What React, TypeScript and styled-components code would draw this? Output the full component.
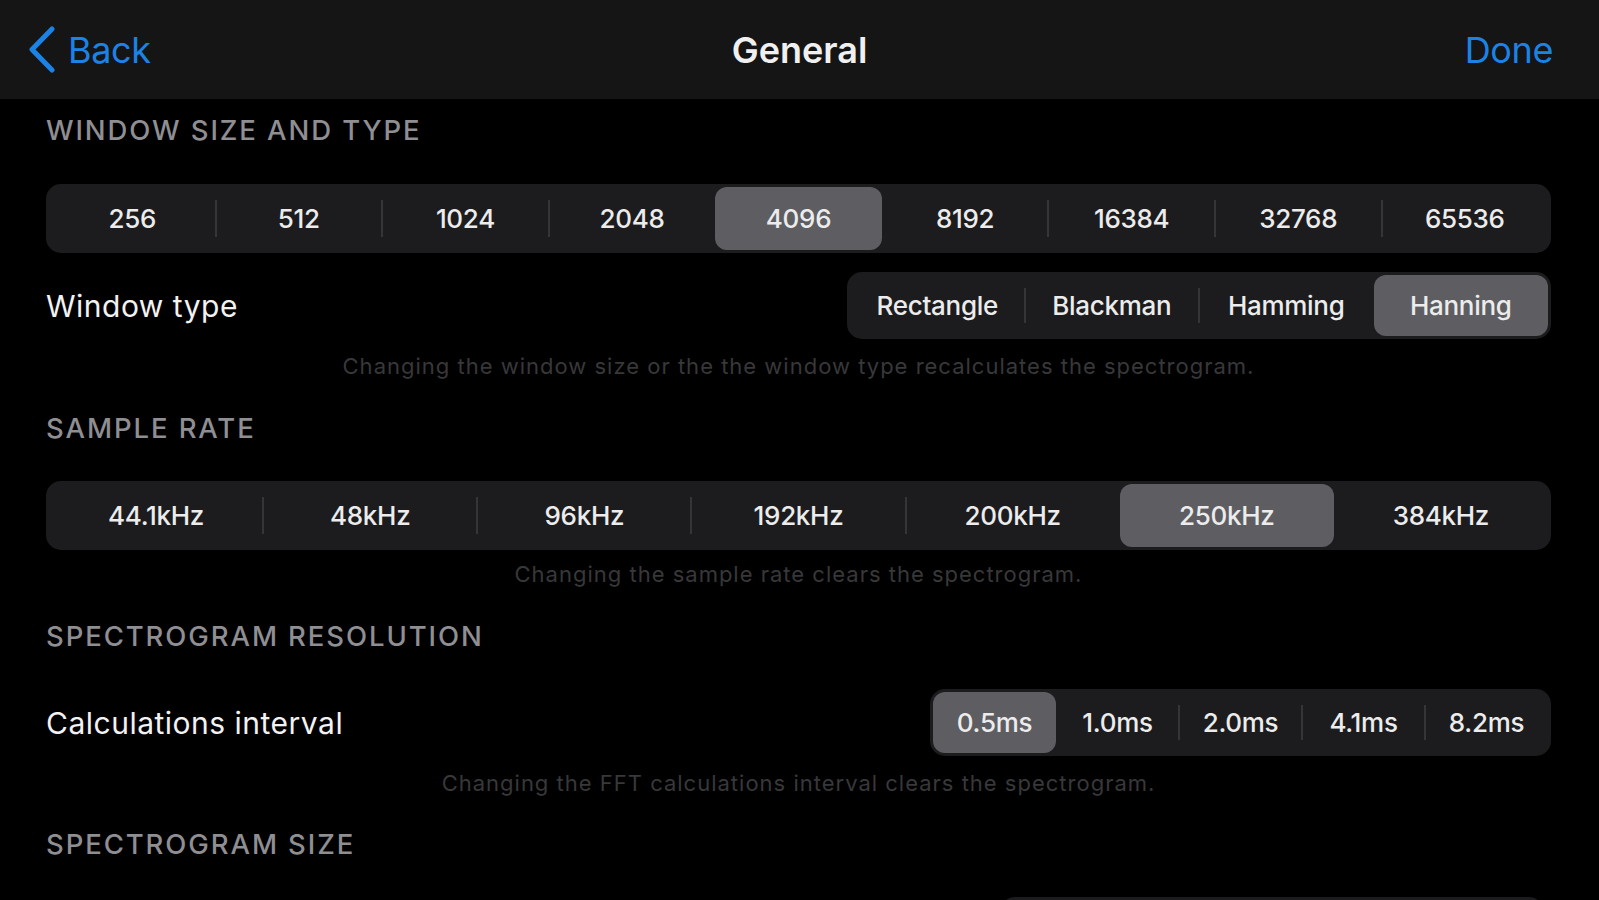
import React from "react";
import styled, { createGlobalStyle } from "styled-components";

const Global = createGlobalStyle`
  html, body { margin: 0; padding: 0; background: #000; }
  body { font-family: "Inter", "Roboto", "Liberation Sans", sans-serif; -webkit-font-smoothing: antialiased; overflow: hidden; }
  #root { width: 1599px; height: 900px; overflow: hidden; }
`;

const Page = styled.div`
  width: 1599px;
  height: 900px;
  background: #000;
  display: flex;
  flex-direction: column;
  overflow: hidden;
`;

const NavBar = styled.header`
  height: 99px;
  flex: none;
  background: #151515;
  display: grid;
  grid-template-columns: 1fr auto 1fr;
  align-items: center;
  padding: 0 46px;
`;

const NavButton = styled.button<{ $align: "start" | "end"; $shift?: number }>`
  justify-self: ${(p) => p.$align};
  margin-left: ${(p) => p.$shift ?? 0}px;
  display: flex;
  align-items: center;
  gap: 10px;
  background: none;
  border: none;
  padding: 0;
  color: #1b83e6;
  font-family: inherit;
  font-size: 36px;
  font-weight: 400;
  letter-spacing: -0.4px;
  cursor: pointer;
`;

const Title = styled.h1`
  margin: 0;
  color: #f0f0f0;
  font-size: 36px;
  font-weight: 600;
  letter-spacing: 0;
`;

const Content = styled.main`
  display: flex;
  flex-direction: column;
  padding: 0 48px 0 46px;
`;

const SectionHeader = styled.h2<{ $mt: number }>`
  margin: ${(p) => p.$mt}px 0 0 0;
  font-size: 27.5px;
  line-height: 34px;
  font-weight: 500;
  color: #8e8e93;
  letter-spacing: 1.9px;
  text-transform: uppercase;
`;

const Control = styled.div<{ $mt?: number; $width?: number; $height: number; $mr?: number }>`
  margin-top: ${(p) => p.$mt ?? 0}px;
  margin-right: ${(p) => p.$mr ?? 0}px;
  ${(p) => (p.$width ? `width: ${p.$width}px;` : "align-self: stretch;")}
  height: ${(p) => p.$height}px;
  flex: none;
  box-sizing: border-box;
  background: #1c1c1e;
  border-radius: 15px;
  padding: 3px;
  display: flex;
  align-items: stretch;
`;

const Segment = styled.div<{ $selected: boolean }>`
  flex: 1 1 0;
  position: relative;
  display: flex;
  align-items: center;
  justify-content: center;
  border-radius: 12px;
  background: ${(p) => (p.$selected ? "#5e5e62" : "transparent")};
  color: #ececec;
  font-size: 26px;
  font-weight: 500;
  letter-spacing: -0.3px;
`;

const Separator = styled.span<{ $visible: boolean }>`
  flex: none;
  width: 2px;
  margin: 13px -1px;
  background: ${(p) => (p.$visible ? "#353538" : "transparent")};
  z-index: 1;
`;

const Row = styled.div<{ $mt: number }>`
  margin-top: ${(p) => p.$mt}px;
  display: flex;
  align-items: center;
  justify-content: space-between;
`;

const TrailingRow = styled.div<{ $mt: number }>`
  margin-top: ${(p) => p.$mt}px;
  display: flex;
  justify-content: flex-end;
`;

const RowLabel = styled.span`
  color: #f2f2f2;
  font-size: 30px;
  font-weight: 400;
  letter-spacing: 0.5px;
`;

const Footnote = styled.p<{ $mt: number }>`
  margin: ${(p) => p.$mt}px 0 0 0;
  text-align: center;
  color: #38383a;
  font-size: 22px;
  line-height: 28px;
  letter-spacing: 1px;
`;

function Segmented({
  items,
  selected,
  width,
  height,
  mt,
}: {
  items: string[];
  selected: number;
  width?: number;
  height: number;
  mt?: number;
}) {
  const parts: React.ReactNode[] = [];
  items.forEach((it, i) => {
    if (i > 0) {
      const vis = i !== selected && i - 1 !== selected;
      parts.push(<Separator key={`s${i}`} $visible={vis} />);
    }
    parts.push(
      <Segment key={it} $selected={i === selected}>
        {it}
      </Segment>
    );
  });
  return (
    <Control $width={width} $height={height} $mt={mt}>
      {parts}
    </Control>
  );
}

const Chevron = () => (
  <svg width="32" height="48" viewBox="0 0 32 48" fill="none">
    <path d="M26 3 L6 23.5 L26 44" stroke="#1b83e6" strokeWidth="5" strokeLinecap="round" strokeLinejoin="round" />
  </svg>
);

export default function App() {
  return (
    <Page>
      <Global />
      <NavBar>
        <NavButton $align="start" $shift={-20}>
          <Chevron />
          <span>Back</span>
        </NavButton>
        <Title>General</Title>
        <NavButton $align="end">Done</NavButton>
      </NavBar>
      <Content>
        <SectionHeader $mt={14}>Window size and type</SectionHeader>
        <Segmented
          mt={37}
          height={69}
          selected={4}
          items={["256", "512", "1024", "2048", "4096", "8192", "16384", "32768", "65536"]}
        />
        <Row $mt={19}>
          <RowLabel>Window type</RowLabel>
          <Segmented width={704} height={67} selected={3} items={["Rectangle", "Blackman", "Hamming", "Hanning"]} />
        </Row>
        <Footnote $mt={13}>
          Changing the window size or the the window type recalculates the spectrogram.
        </Footnote>

        <SectionHeader $mt={31}>Sample rate</SectionHeader>
        <Segmented
          mt={36}
          height={69}
          selected={5}
          items={["44.1kHz", "48kHz", "96kHz", "192kHz", "200kHz", "250kHz", "384kHz"]}
        />
        <Footnote $mt={10}>Changing the sample rate clears the spectrogram.</Footnote>

        <SectionHeader $mt={31}>Spectrogram resolution</SectionHeader>
        <Row $mt={36}>
          <RowLabel>Calculations interval</RowLabel>
          <Segmented width={621} height={67} selected={0} items={["0.5ms", "1.0ms", "2.0ms", "4.1ms", "8.2ms"]} />
        </Row>
        <Footnote $mt={13}>Changing the FFT calculations interval clears the spectrogram.</Footnote>

        <SectionHeader $mt={30}>Spectrogram size</SectionHeader>
        <TrailingRow $mt={36}>
          <Control $width={544} $height={67} $mr={7} />
        </TrailingRow>
      </Content>
    </Page>
  );
}
